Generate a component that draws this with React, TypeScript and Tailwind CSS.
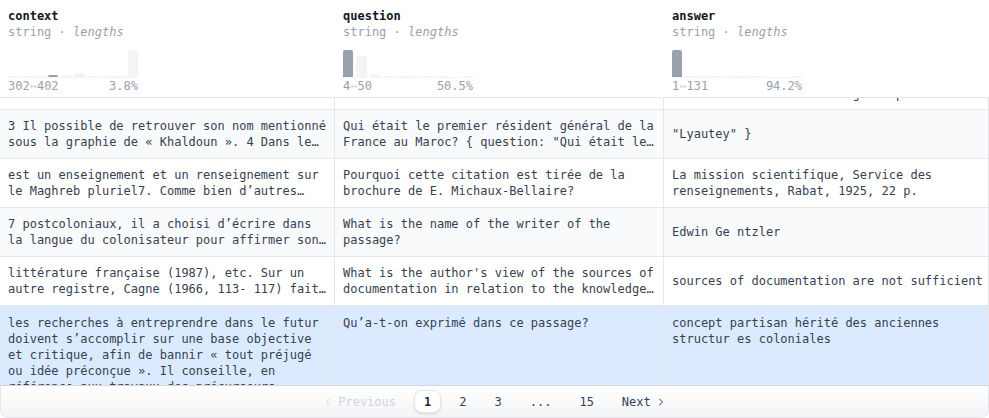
import React from "react";

type Bin = { h: number; dark?: boolean };

function Hist({ bins, left, right }: { bins: Bin[]; left: React.ReactNode; right: string }) {
  return (
    <div className="mt-[10px] w-[130px]">
      <div className="flex h-[27px] items-end gap-[3px]">
        {bins.map((b, i) => (
          <div
            key={i}
            className={b.dark ? "flex-1 rounded-t-[2px] bg-gray-400" : "flex-1 rounded-t-[2px] bg-gray-100"}
            style={{ height: b.h }}
          />
        ))}
      </div>
      <div className="h-px bg-gray-100" />
      <div className="flex justify-between leading-4 text-gray-400">
        <span>{left}</span>
        <span>{right}</span>
      </div>
    </div>
  );
}

function HeaderCell({ name, bins, left, right, border }: { name: string; bins: Bin[]; left: React.ReactNode; right: string; border?: boolean }) {
  return (
    <div className="px-2 pt-2">
      <div className="font-bold leading-4 text-gray-900">{name}</div>
      <div className="leading-4 text-gray-400">
        string · <span className="italic">lengths</span>
      </div>
      <Hist bins={bins} left={left} right={right} />
    </div>
  );
}

function Cell({ children, single, last }: { children: React.ReactNode; single?: boolean; last?: boolean }) {
  return (
    <div className={last ? "flex h-[48px] items-center border-r border-gray-200 pl-2 pr-1" : "flex h-[48px] items-center border-r border-gray-200 pl-2 pr-1.5"}>
      <div className={single ? "leading-4" : "line-clamp-2 leading-4"}>{children}</div>
    </div>
  );
}

function Row({ bg, c1, c2, c3 }: { bg: string; c1: string; c2: string; c3: string }) {
  return (
    <div className={bg === "gray" ? "grid grid-cols-[335px_329px_325px] border-b border-gray-200 bg-gray-50" : "grid grid-cols-[335px_329px_325px] border-b border-gray-200 bg-white"}>
      <Cell>{c1}</Cell>
      <Cell>{c2}</Cell>
      <Cell last>{c3}</Cell>
    </div>
  );
}

function Chevron({ dir }: { dir: "left" | "right" }) {
  return (
    <svg width="12" height="12" viewBox="0 0 24 24" fill="none" stroke="currentColor" strokeWidth="2" strokeLinecap="round" strokeLinejoin="round">
      {dir === "left" ? <path d="M15 18l-6-6 6-6" /> : <path d="M9 18l6-6-6-6" />}
    </svg>
  );
}

export default function App() {
  const arrow = <span className="text-gray-300">↔</span>;
  return (
    <div className="h-[418px] w-[989px] overflow-hidden bg-white font-['DejaVu_Sans_Mono',monospace] text-[12px] text-gray-700">
      {/* header */}
      <div className="grid h-[98px] grid-cols-[335px_329px_325px] border-b border-gray-200">
        <HeaderCell
          name="context"
          bins={[{ h: 1 }, { h: 1 }, { h: 1 }, { h: 2, dark: true }, { h: 2 }, { h: 4 }, { h: 1 }, { h: 1 }, { h: 1 }, { h: 27 }]}
          left={<>302{arrow}402</>}
          right="3.8%"
        />
        <HeaderCell
          name="question"
          bins={[{ h: 27, dark: true }, { h: 21 }, { h: 3 }, { h: 1 }, { h: 1 }, { h: 1 }, { h: 1 }, { h: 1 }, { h: 0 }, { h: 1 }]}
          left={<>4{arrow}50</>}
          right="50.5%"
        />
        <HeaderCell
          name="answer"
          bins={[{ h: 27, dark: true }, { h: 1 }, { h: 1 }, { h: 1 }, { h: 1 }, { h: 1 }, { h: 1 }, { h: 0 }, { h: 0 }, { h: 1 }]}
          left={<>1{arrow}131</>}
          right="94.2%"
        />
      </div>

      {/* partially scrolled row */}
      <div className="grid h-[12px] grid-cols-[335px_329px_325px] overflow-hidden border-b border-gray-200 bg-white">
        <div className="border-r border-gray-200" />
        <div className="border-r border-gray-200" />
        <div className="overflow-hidden border-r border-gray-200 pl-2">
          <div className="-mt-[12px] whitespace-pre leading-4">{"                         g     p"}</div>
        </div>
      </div>

      <Row
        bg="gray"
        c1="3 Il possible de retrouver son nom mentionné sous la graphie de « Khaldoun ». 4 Dans le cadre de cette étude, nous avons choisi de présenter"
        c2={'Qui était le premier résident général de la France au Maroc? { question: "Qui était le premier résident" }'}
        c3={'"Lyautey" }'}
      />
      <Row
        bg="white"
        c1="est un enseignement et un renseignement sur le Maghreb pluriel7. Comme bien d’autres auteurs de sa génération"
        c2="Pourquoi cette citation est tirée de la brochure de E. Michaux-Bellaire?"
        c3="La mission scientifique, Service des renseignements, Rabat, 1925, 22 p."
      />
      <Row
        bg="gray"
        c1="7 postcoloniaux, il a choisi d’écrire dans la langue du colonisateur pour affirmer son identité propre"
        c2="What is the name of the writer of the passage?"
        c3="Edwin Ge ntzler"
      />
      <Row
        bg="white"
        c1="littérature française (1987), etc. Sur un autre registre, Cagne (1966, 113- 117) fait remarquer que"
        c2="What is the author's view of the sources of documentation in relation to the knowledge of the Maghreb?"
        c3="sources of documentation are not sufficient"
      />

      {/* expanded / selected row */}
      <div className="grid h-[79px] grid-cols-[335px_329px_325px] overflow-hidden bg-blue-100">
        <div className="border-r border-gray-200 pl-2 pr-1.5 pt-[9px] leading-4">
          les recherches à entreprendre dans le futur doivent s’accomplir sur une base objective et critique, afin de bannir « tout préjugé ou idée préconçue ». Il conseille, en référence aux travaux des précurseurs, d’éviter
        </div>
        <div className="border-r border-gray-200 pl-2 pr-1.5 pt-[9px] leading-4">Qu’a-t-on exprimé dans ce passage?</div>
        <div className="border-r border-gray-200 pl-2 pr-1 pt-[9px] leading-4">concept partisan hérité des anciennes structur es coloniales</div>
      </div>

      {/* pagination */}
      <div className="flex h-[33px] items-center justify-center gap-2 rounded-b-lg border-x border-b border-t border-gray-200 border-t-gray-300 border-t-dashed bg-linear-to-b from-white to-gray-100">
        <div className="flex items-center gap-1 px-[10px] text-gray-300">
          <Chevron dir="left" />
          <span>Previous</span>
        </div>
        <div className="flex h-[23px] items-center rounded-lg border border-gray-200 bg-white px-[9px] font-bold text-gray-800 shadow-sm">1</div>
        <div className="flex h-[23px] items-center border border-transparent px-[9px] text-gray-700">2</div>
        <div className="flex h-[23px] items-center border border-transparent px-[9px] text-gray-700">3</div>
        <div className="flex h-[23px] items-center border border-transparent px-[9px] text-gray-700">...</div>
        <div className="flex h-[23px] items-center border border-transparent px-[9px] text-gray-700">15</div>
        <div className="flex items-center gap-1 px-[10px] text-gray-700">
          <span>Next</span>
          <Chevron dir="right" />
        </div>
      </div>
    </div>
  );
}
